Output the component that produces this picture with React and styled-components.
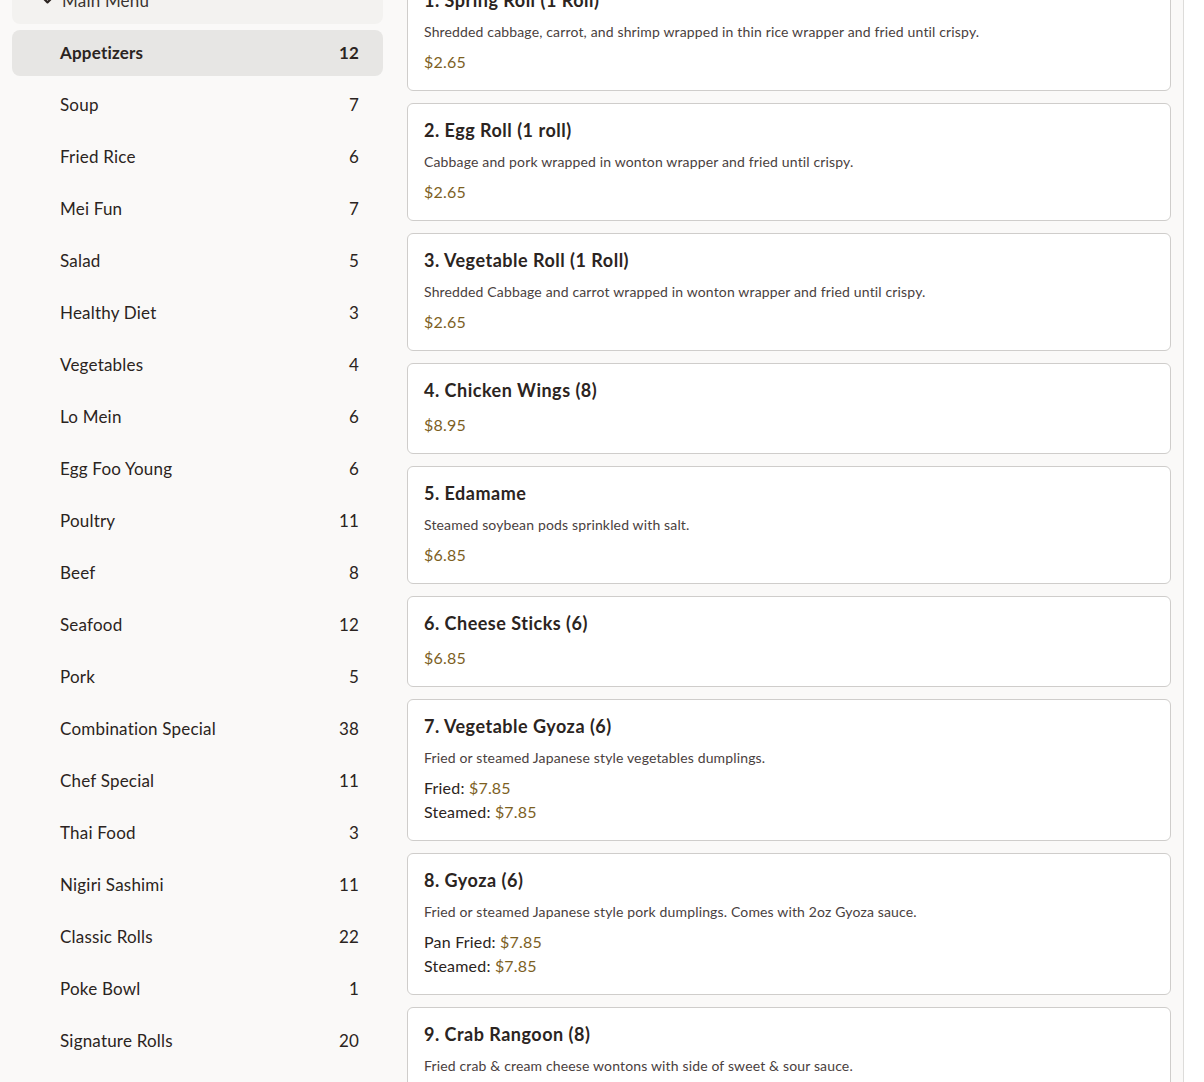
import React from 'react'
import styled, { createGlobalStyle } from 'styled-components'
import { ChevronDown } from 'lucide-react'

const GlobalStyle = createGlobalStyle`
	* { box-sizing: border-box; }
	html, body { margin: 0; padding: 0; background: #faf9f8; overflow: hidden; }
	body { font-family: Lato, "Noto Sans", sans-serif; color: #2b2421; }
`

const categories = [
	['Appetizers', 12],
	['Soup', 7],
	['Fried Rice', 6],
	['Mei Fun', 7],
	['Salad', 5],
	['Healthy Diet', 3],
	['Vegetables', 4],
	['Lo Mein', 6],
	['Egg Foo Young', 6],
	['Poultry', 11],
	['Beef', 8],
	['Seafood', 12],
	['Pork', 5],
	['Combination Special', 38],
	['Chef Special', 11],
	['Thai Food', 3],
	['Nigiri Sashimi', 11],
	['Classic Rolls', 22],
	['Poke Bowl', 1],
	['Signature Rolls', 20],
	['Special Rolls', 9],
]

const items = [
	{ name: '1. Spring Roll (1 Roll)', desc: 'Shredded cabbage, carrot, and shrimp wrapped in thin rice wrapper and fried until crispy.', prices: [[null, '$2.65']] },
	{ name: '2. Egg Roll (1 roll)', desc: 'Cabbage and pork wrapped in wonton wrapper and fried until crispy.', prices: [[null, '$2.65']] },
	{ name: '3. Vegetable Roll (1 Roll)', desc: 'Shredded Cabbage and carrot wrapped in wonton wrapper and fried until crispy.', prices: [[null, '$2.65']] },
	{ name: '4. Chicken Wings (8)', prices: [[null, '$8.95']] },
	{ name: '5. Edamame', desc: 'Steamed soybean pods sprinkled with salt.', prices: [[null, '$6.85']] },
	{ name: '6. Cheese Sticks (6)', prices: [[null, '$6.85']] },
	{ name: '7. Vegetable Gyoza (6)', desc: 'Fried or steamed Japanese style vegetables dumplings.', prices: [['Fried', '$7.85'], ['Steamed', '$7.85']] },
	{ name: '8. Gyoza (6)', desc: 'Fried or steamed Japanese style pork dumplings. Comes with 2oz Gyoza sauce.', prices: [['Pan Fried', '$7.85'], ['Steamed', '$7.85']] },
	{ name: '9. Crab Rangoon (8)', desc: 'Fried crab & cream cheese wontons with side of sweet & sour sauce.', prices: [[null, '$7.85']] },
]

export default function App () {
	return (
		<>
			<GlobalStyle />
			<Viewport>
				<Layout>
					<Sidebar aria-label='Menu categories'>
						<MenuHeader>
							<ChevronDown size={15} strokeWidth={3.5} />
							<span>Main Menu</span>
						</MenuHeader>
						{categories.map(([name, count], i) => (
							<CategoryRow key={name} $active={i === 0}>
								<span>{name}</span>
								<span>{count}</span>
							</CategoryRow>
						))}
					</Sidebar>
					<ItemList>
						{items.map(item => (
							<Card key={item.name}>
								<Title>{item.name}</Title>
								{item.desc && <Description>{item.desc}</Description>}
								{item.prices.map(([label, price]) => (
									<PriceLine key={price + label}>
										{label && <Label>{label}: </Label>}
										<Price>{price}</Price>
									</PriceLine>
								))}
							</Card>
						))}
					</ItemList>
				</Layout>
				<ScrollTrack />
			</Viewport>
		</>
	)
}

const Viewport = styled.div`
	display: flex;
	height: 1082px;
	overflow: hidden;
`

const Layout = styled.div`
	display: flex;
	align-items: flex-start;
	gap: 24px;
	width: 1184px;
	padding: 0 12px;
	margin-top: -27px;
	border-right: 1px solid #dddcda;
`

const ScrollTrack = styled.div`
	flex: 1;
	background: #fff;
`

const Sidebar = styled.nav`
	width: 371px;
	flex-shrink: 0;
	display: flex;
	flex-direction: column;
	gap: 6px;
	margin-top: 4px;
`

const MenuHeader = styled.div`
	display: flex;
	align-items: center;
	gap: 7px;
	height: 47px;
	padding-left: 28px;
	background: #f3f2f0;
	border-radius: 8px;
	font-size: 17px;
	letter-spacing: 0.2px;
	color: #3a3431;
	svg { color: #2b2421; }
`

const CategoryRow = styled.div`
	display: flex;
	justify-content: space-between;
	align-items: center;
	height: 46px;
	padding: 0 24px 2px 48px;
	border-radius: 8px;
	font-size: 17px;
	letter-spacing: 0.2px;
	color: #2b2421;
	background: ${p => p.$active ? '#e7e6e4' : 'transparent'};
	font-weight: ${p => p.$active ? 700 : 400};
`

const ItemList = styled.main`
	flex: 1;
	display: flex;
	flex-direction: column;
	gap: 12px;
`

const Card = styled.article`
	background: #fff;
	border: 1px solid #cfcdcb;
	border-radius: 6px;
	padding: 16px;
`

const Title = styled.h3`
	margin: 0 0 13px;
	font-size: 18px;
	line-height: 20px;
	font-weight: 700;
	letter-spacing: 0.5px;
	color: #2b2421;
`

const Description = styled.p`
	margin: -1px 0 8px;
	font-size: 14px;
	line-height: 20px;
	letter-spacing: 0.15px;
	color: #4a4140;
`

const PriceLine = styled.div`
	font-size: 16px;
	line-height: 24px;
	letter-spacing: 0.2px;
`

const Label = styled.span`
	color: #2b2421;
`

const Price = styled.span`
	color: #7d5f1f;
`
